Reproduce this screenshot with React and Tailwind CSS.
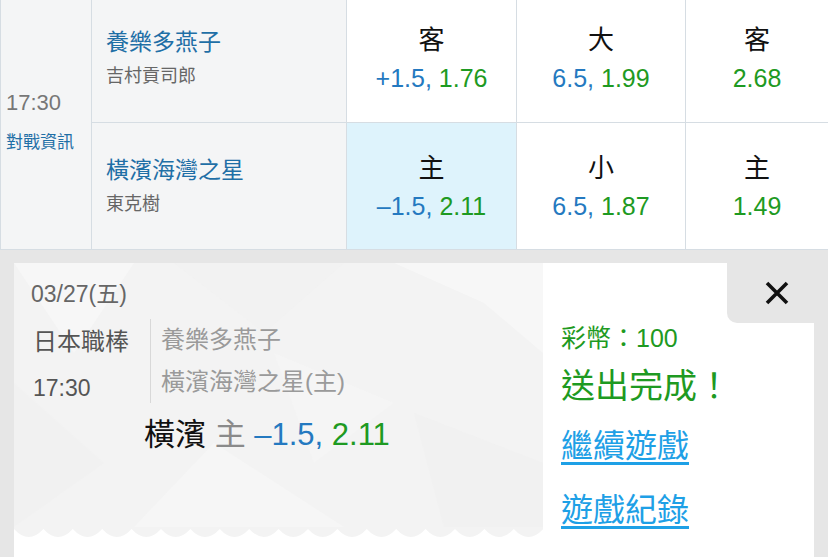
const FONT = "font-['Liberation_Sans','Noto_Sans_CJK_TC',sans-serif]";

const rows = [
  {
    team: "養樂多燕子",
    pitcher: "吉村貢司郎",
    pad: "pt-[27px]",
    oddsPad: "pt-[25px]",
    odds: [
      { label: "客", line: "+1.5,", price: "1.76" },
      { label: "大", line: "6.5,", price: "1.99" },
      { label: "客", price: "2.68" },
    ],
  },
  {
    team: "橫濱海灣之星",
    pitcher: "東克樹",
    pad: "pt-[32px]",
    oddsPad: "pt-[30px]",
    selected: 0,
    odds: [
      { label: "主", line: "–1.5,", price: "2.11" },
      { label: "小", line: "6.5,", price: "1.87" },
      { label: "主", price: "1.49" },
    ],
  },
];

function OddsCell({ odd, selected, pad, last }) {
  return (
    <div
      className={`flex flex-col items-center border-b border-[#d6dde3] ${last ? "" : "border-r"} ${pad} ${selected ? "bg-[#def3fc]" : "bg-white"}`}
    >
      <span className="text-[26px] leading-[30px] text-[#111]">{odd.label}</span>
      <span className="mt-[8px] text-[25px] leading-[30px]">
        {odd.line && <span className="text-[#2479c0]">{odd.line} </span>}
        <span className="text-[#1e9a22]">{odd.price}</span>
      </span>
    </div>
  );
}

function Backdrop() {
  return (
    <svg className="absolute inset-0 h-full w-full" viewBox="0 0 529 264" preserveAspectRatio="none">
      <polygon points="0,0 120,0 60,90" fill="#f7f7f7" />
      <polygon points="160,0 330,0 250,70" fill="#efefef" opacity="0.4" />
      <polygon points="380,0 529,0 529,90 470,40" fill="#f7f7f7" />
      <polygon points="0,120 90,200 0,264" fill="#efefef" opacity="0.5" />
      <polygon points="200,180 330,264 120,264" fill="#f6f6f6" />
      <polygon points="400,150 529,200 529,264 430,264" fill="#efefef" opacity="0.5" />
      <polygon points="260,90 380,140 300,200" fill="#f5f5f5" />
    </svg>
  );
}

function Wave() {
  let d = "M0 0 H529 V4";
  const period = 29.4;
  for (let i = 18; i > 0; i--) {
    const x1 = i * period;
    const x0 = x1 - period;
    d += ` L${x1} 2 Q${x1 - period / 2} 18 ${x0} 2`;
  }
  d += " L0 0 Z";
  return (
    <svg className="block h-[12px] w-full" viewBox="0 0 529 12" preserveAspectRatio="none">
      <path d={d} fill="#f3f3f3" />
    </svg>
  );
}

export default function App() {
  return (
    <div className={`h-[557px] w-[828px] overflow-hidden bg-[#e6e6e6] ${FONT}`}>
      {/* match table */}
      <div className="grid h-[250px] grid-cols-[92px_255px_170px_169px_142px] grid-rows-[123px_127px] bg-white">
        <div className="row-span-2 flex flex-col justify-center border-b border-l border-r border-[#d6dde3] bg-[#f4f5f6] pb-[6px] pl-[5px]">
          <span className="text-[22px] leading-[28px] text-[#777]">17:30</span>
          <span className="mt-[14px] text-[17px] leading-[24px] text-[#1f6fa6]">對戰資訊</span>
        </div>
        {rows.map((row) => (
          <div key={row.team} className="contents">
            <div className={`flex flex-col border-b border-r border-[#d6dde3] bg-[#f4f5f6] pl-[14px] ${row.pad}`}>
              <span className="text-[23px] leading-[30px] text-[#1f6fa6]">{row.team}</span>
              <span className="mt-[7px] text-[18px] leading-[24px] text-[#666]">{row.pitcher}</span>
            </div>
            {row.odds.map((odd, i) => (
              <OddsCell
                key={i}
                odd={odd}
                pad={row.oddsPad}
                selected={row.selected === i}
                last={i === 2}
              />
            ))}
          </div>
        ))}
      </div>

      {/* receipt */}
      <div className="px-[14px] pt-[13px]">
        <div className="relative flex h-[300px] bg-white">
          <div className="flex w-[529px] flex-col">
            <div className="relative h-[264px] bg-[#f3f3f3]">
              <Backdrop />
              <div className="relative pl-[17px] pt-[16px]">
                <div className="text-[23px] leading-[30px] text-[#666]">03/27(五)</div>
                <div className="mt-[10px] flex items-start">
                  <div className="w-[119px] pl-[2px] text-[#555]">
                    <div className="text-[24px] leading-[46px]">日本職棒</div>
                    <div className="text-[23px] leading-[46px]">17:30</div>
                  </div>
                  <div className="border-l border-[#d8d8d8] pl-[10px] text-[24px] leading-[42px] text-[#9a9a9a]">
                    <div>養樂多燕子</div>
                    <div>橫濱海灣之星(主)</div>
                  </div>
                </div>
                <div className="mt-[4px] pl-[113px] text-[31px] leading-[40px]">
                  <span className="text-[#111]">橫濱 </span>
                  <span className="text-[#8a8a8a]">主 </span>
                  <span className="text-[#2479c0]">–1.5, </span>
                  <span className="text-[#1e9a22]">2.11</span>
                </div>
              </div>
            </div>
            <Wave />
          </div>
          <div className="flex flex-1 flex-col pl-[18px] pt-[59px]">
            <div className="text-[25px] leading-[32px] text-[#1e9a22]">彩幣：100</div>
            <div className="mt-[10px] text-[34px] leading-[44px] text-[#1e9a22]">送出完成！</div>
            <a className="mt-[18px] w-fit text-[32px] leading-[40px] text-[#1ea0e6] underline underline-offset-[5px]">繼續遊戲</a>
            <a className="mt-[24px] w-fit text-[32px] leading-[40px] text-[#1ea0e6] underline underline-offset-[5px]">遊戲紀錄</a>
          </div>
          <div className="absolute right-[-14px] top-0 flex h-[60px] w-[101px] items-center justify-center rounded-bl-[10px] bg-[#e6e6e6]">
            <svg width="24" height="24" viewBox="0 0 24 24" className="ml-[-1px] mt-[-1px]">
              <path d="M2 2 L22 22 M22 2 L2 22" stroke="#111" strokeWidth="3.6" />
            </svg>
          </div>
        </div>
      </div>
    </div>
  );
}
